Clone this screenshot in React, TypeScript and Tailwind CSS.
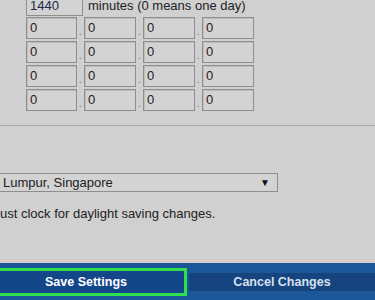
import React from "react";

const Box = ({ w = 52, v = "0" }: { w?: number; v?: string }) => (
  <div
    className="h-[22px] border border-[#8e8e8e] bg-[#d3d3d3] pl-[3px] flex items-center text-[13px] text-[#222] shadow-[inset_1px_1px_0_#bdbdbd]"
    style={{ width: w }}
  >
    {v}
  </div>
);

const Dot = () => (
  <div className="w-[7px] h-[22px] flex items-end justify-center text-[10px] leading-[14px] text-[#777]">.</div>
);

export default function App() {
  return (
    <div
      className="w-[375px] h-[300px] bg-[#d0d0d0] overflow-hidden flex flex-col"
      style={{ fontFamily: '"Liberation Sans", Arial, sans-serif' }}
    >
      <div className="flex items-center mt-[-5px] pl-[26px] h-[21px]">
        <div className="w-[57px] h-[21px] border border-[#8e8e8e] bg-[#d3d3d3] pl-[3px] flex items-center text-[13px] text-[#1a2a4a]">1440</div>
        <span className="ml-[5px] text-[13px] text-[#222]">minutes (0 means one day)</span>
      </div>
      <div className="flex flex-col gap-[2px] mt-[1px] pl-[26px]">
        {[0, 1, 2, 3].map((r) => (
          <div key={r} className="flex">
            <Box w={51} />
            <Dot />
            <Box />
            <Dot />
            <Box />
            <Dot />
            <Box />
          </div>
        ))}
      </div>
      <div className="mt-[14px] border-t border-[#ababab] h-0" />
      <div className="mt-[47px] ml-[-2px] w-[280px] h-[19px] border border-[#8e8e8e] bg-[#d3d3d3] flex items-center justify-between pl-[4px] pr-[7px]">
        <span className="text-[13px] text-[#222]">Lumpur, Singapore</span>
        <span className="text-[10px] text-[#111]">▼</span>
      </div>
      <div className="mt-[14px] text-[13px] text-[#222] leading-[15px]">ust clock for daylight saving changes.</div>
      <div className="mt-[39px] h-[3px] bg-[#dccacd]" />
      <div className="flex-1 bg-[#1c5799] flex items-start pt-[5px] gap-[2px]">
        <div className="ml-[-3px] w-[190px] h-[28px] border-[3px] border-[#2ee04a] bg-[#14478a] flex items-center justify-center text-[12.5px] font-bold text-white">
          <span className="mr-[12px]">Save Settings</span>
        </div>
        <div className="mt-[5px] w-[186px] h-[18px] bg-[#15447f] flex items-center justify-center text-[12.5px] font-bold text-[#d7e0ee]">
          Cancel Changes
        </div>
      </div>
    </div>
  );
}
